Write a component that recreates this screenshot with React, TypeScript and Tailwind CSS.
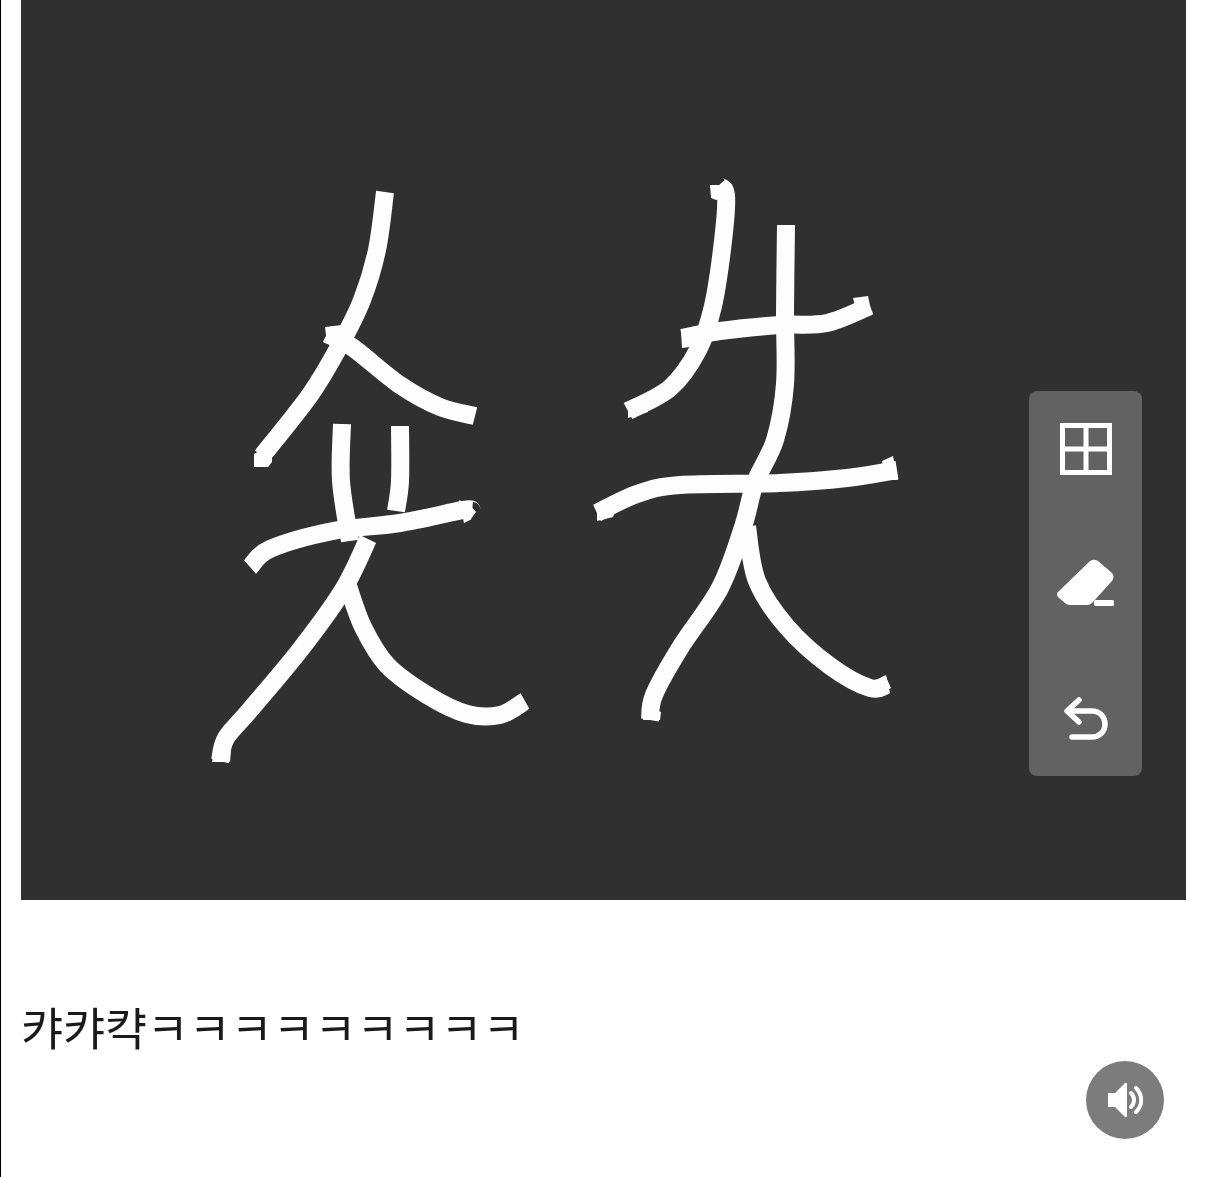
const strokes: number[][][] = [
  [[385,192],[377,250],[362,300],[340,345],[310,395],[262,456]],
  [[327,334],[352,347],[400,385],[440,407],[475,416]],
  [[342,424],[341,481],[350,541]],
  [[400,426],[400,481],[396,511]],
  [[250,567],[270,549],[333,531],[400,523],[463,510],[472,511]],
  [[368,539],[343,590],[300,650],[250,710],[226,738],[220,761]],
  [[348,586],[363,627],[387,665],[427,695],[467,714],[500,715],[525,701]],
  [[718,186],[726,195],[723,241],[713,306],[698,350],[670,388],[628,411]],
  [[682,338],[720,331],[780,325],[827,323],[870,306]],
  [[786,225],[785,313],[785,384],[775,440],[755,483],[743,527],[720,588],[680,648],[654,695],[650,720]],
  [[597,513],[637,494],[680,485],[780,483],[847,478],[897,470]],
  [[747,527],[757,581],[787,627],[830,666],[870,688],[888,684]],
];

function smooth(p: number[][]) {
  let d = `M${p[0][0]} ${p[0][1]}`;
  for (let i = 0; i < p.length - 1; i++) {
    const a = p[Math.max(i - 1, 0)];
    const b = p[i];
    const c = p[i + 1];
    const e = p[Math.min(i + 2, p.length - 1)];
    const c1x = b[0] + (c[0] - a[0]) / 6;
    const c1y = b[1] + (c[1] - a[1]) / 6;
    const c2x = c[0] - (e[0] - b[0]) / 6;
    const c2y = c[1] - (e[1] - b[1]) / 6;
    d += ` C${c1x} ${c1y} ${c2x} ${c2y} ${c[0]} ${c[1]}`;
  }
  return d;
}

function Grid() {
  return (
    <svg width="52" height="52" viewBox="0 0 52 52" fill="none" stroke="#fff" strokeWidth="5">
      <rect x="2.5" y="2.5" width="47" height="47" />
      <path d="M26 2V50M2 26H50" />
    </svg>
  );
}

function Eraser() {
  return (
    <svg width="60" height="52" viewBox="0 0 60 52" fill="#fff">
      <path d="M2 34 L33 4 Q37 0 42 3 L56 15 Q59 19 56 23 L36 45 Q34 47 31 47 L14 47 Q11 47 9 45 L2 39 Q0 36 2 34 Z" />
      <rect x="38" y="42" width="20" height="6" rx="1.5" />
    </svg>
  );
}

function Undo() {
  return (
    <svg width="48" height="46" viewBox="0 0 48 46" fill="none" stroke="#fff" strokeWidth="5.5" strokeLinecap="round" strokeLinejoin="round">
      <path d="M17 4 L5 15 L17 26" />
      <path d="M6 15 H30 C38 15 43 21 43 28 C43 36 37 41 30 41 H10" />
    </svg>
  );
}

export default function App() {
  return (
    <div className="relative h-[1177px] w-[1206px] overflow-hidden border-l border-black bg-white pl-5 pr-5">
      <div className="relative h-[900px] w-[1165px] bg-[#303030]">
        <svg className="h-full w-full blur-[0.6px]" viewBox="21 0 1165 900" fill="none">
          {strokes.map((s, i) => (
            <path key={i} d={smooth(s)} stroke="#fdfdfd" strokeWidth="18" strokeLinejoin="round" />
          ))}
          <path d="M254 467 V454 L272 444 V462 L268 467 Z M325 327 L342 325 L350 340 L327 343 Z M212 762 L215 748 L231 750 L230 762 Z M710 185 H724 L733 194 L716 200 L711 198 Z M643 720 L646 706 L661 712 L660 720 Z M681 331 L695 328 L698 346 L682 348 Z M597 521 V509 L615 512 L613 517 Z M459 500 L470 505 L476 512 L470 520 L464 523 Z M853 298 L868 296 L872 315 L858 318 Z M882 461 L893 456 L898 480 L884 480 Z M876 680 L886 677 L891 688 L878 695 Z M628 418 V402 L645 400 L648 412 Z" fill="#fdfdfd" />
        </svg>
        <div className="absolute left-[1008px] top-[391px] flex h-[385px] w-[113px] flex-col items-center rounded-lg bg-[#626262] pt-8">
          <Grid />
          <div className="mt-[83px]">
            <Eraser />
          </div>
          <div className="mt-[86px]">
            <Undo />
          </div>
        </div>
      </div>
      <p className="mt-[96px] whitespace-nowrap text-[45.6px] leading-[60px] text-[#1a1a1a] blur-[0.4px] [font-family:'Noto_Sans_CJK_KR',sans-serif]">
        캬캬캭ㅋㅋㅋㅋㅋㅋㅋㅋㅋ
      </p>
      <button className="absolute left-[1085px] top-[1061px] flex h-[78px] w-[78px] items-center justify-center rounded-full bg-[#7c7c7c]">
        <svg width="36" height="36" viewBox="0 0 36 36" fill="none">
          <path d="M1 11 H8 L18 1 Q20 0 20 3 V33 Q20 36 18 35 L8 25 H1 Z" fill="#fff" />
          <path d="M24 11 C28 15 28 21 24 25" stroke="#fff" strokeWidth="4" strokeLinecap="round" />
          <path d="M29 6 C36 13 36 23 29 30" stroke="#fff" strokeWidth="4" strokeLinecap="round" />
        </svg>
      </button>
    </div>
  );
}
